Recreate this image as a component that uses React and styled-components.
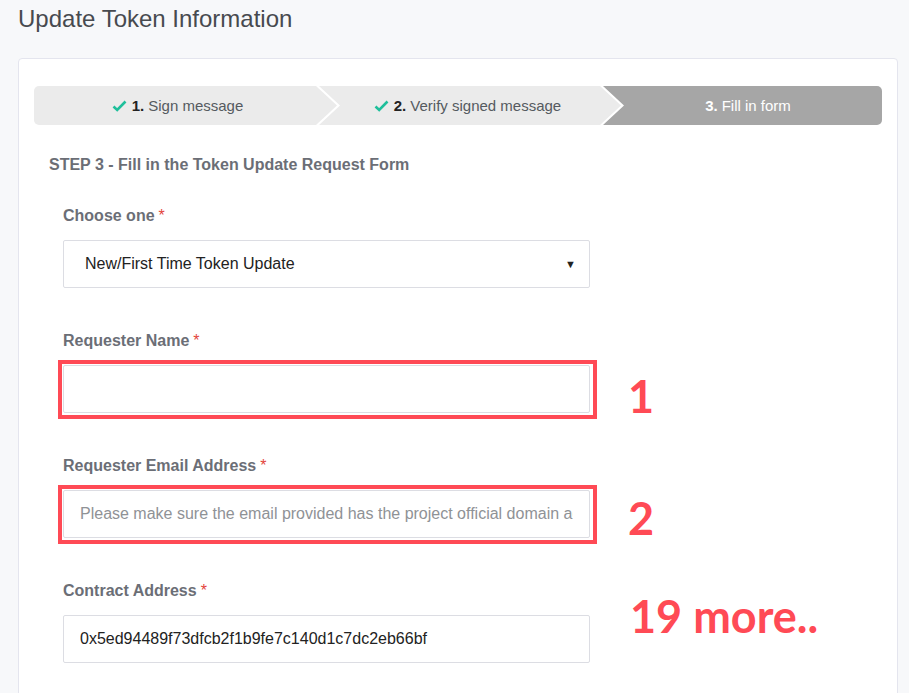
import React from "react";
import styled, { createGlobalStyle } from "styled-components";

const Global = createGlobalStyle`
  html, body { margin: 0; padding: 0; background: #f7f8fa; }
  body { font-family: "Liberation Sans", Arial, sans-serif; overflow: hidden; }
  * { box-sizing: border-box; }
`;

const Page = styled.div`
  padding: 5px 12px 0 18px;
  height: 693px;
  overflow: hidden;
`;

const Title = styled.h1`
  margin: 0 0 25px 0;
  font-size: 24px;
  line-height: 28px;
  font-weight: 400;
  color: #474a4f;
`;

const Card = styled.div`
  width: 880px;
  background: #fff;
  border: 1px solid #e4e5ee;
  border-radius: 4px;
  padding: 27px 15px 40px 15px;
  min-height: 700px;
`;

const StepBar = styled.div`
  display: flex;
  height: 39px;
  border-radius: 5px;
  overflow: hidden;
`;

const Step = styled.div`
  flex: ${(p) => (p.$last ? "1 1 auto" : `0 0 ${p.$w}px`)};
  margin-left: ${(p) => (p.$first ? "0" : "-18px")};
  background: ${(p) => (p.$active ? "#a6a6a6" : "#ebebeb")};
  color: ${(p) => (p.$active ? "#ffffff" : "#555a60")};
  display: flex;
  align-items: center;
  justify-content: center;
  font-size: 15px;
  padding-left: ${(p) => (p.$first ? "0" : "11px")};
  padding-right: ${(p) => (p.$last ? "0" : "16px")};
  clip-path: ${(p) => {
    const notch = p.$first ? "" : ", 21px 50%";
    if (p.$last) return `polygon(0 0, 100% 0, 100% 100%, 0 100%${notch})`;
    return `polygon(0 0, calc(100% - 21px) 0, 100% 50%, calc(100% - 21px) 100%, 0 100%${notch})`;
  }};
`;

const StepNum = styled.b`
  font-weight: 700;
  margin-right: 4px;
  color: ${(p) => (p.$active ? "#ffffff" : "#222")};
`;

const Check = styled.svg`
  width: 15px;
  height: 12px;
  margin-right: 5px;
  flex: none;
`;

const FormSection = styled.div`
  padding-left: 15px;
  padding-top: 31px;
`;

const Heading = styled.h2`
  margin: 0 0 32px 0;
  font-size: 16px;
  line-height: 18px;
  font-weight: 700;
  color: #6b6e76;
`;

const Fields = styled.div`
  padding-left: 14px;
  display: flex;
  flex-direction: column;
  gap: 43px;
`;

const Field = styled.div`
  position: relative;
  width: 527px;
`;

const Label = styled.label`
  display: block;
  font-size: 16px;
  line-height: 20px;
  font-weight: 700;
  color: #6b6e76;
  margin-bottom: 14px;
`;

const Req = styled.span`
  color: #e3443b;
  font-weight: 400;
  margin-left: 4px;
`;

const Control = styled.div`
  position: relative;
  height: 48px;
  border: 1px solid #dcdde3;
  border-radius: 2px;
  background: #fff;
  display: flex;
  align-items: center;
  padding: 0 16px 0 16px;
  font-size: 16px;
  color: #222;
  white-space: nowrap;

  ${(p) =>
    p.$marked &&
    `&::after {
      content: "";
      position: absolute;
      left: -6px;
      top: -6px;
      right: -8px;
      bottom: -7px;
      border: 4px solid #ff4a55;
    }`}
`;

const SelectControl = styled(Control)`
  padding-left: 21px;
  justify-content: space-between;
`;

const Clip = styled.span`
  display: block;
  overflow: hidden;
  flex: 1;
  color: ${(p) => (p.$placeholder ? "#8f9296" : "#222")};
`;

const Caret = styled.span`
  font-size: 11px;
  color: #222;
  margin-right: -3px;
`;

const Note = styled.div`
  position: absolute;
  left: ${(p) => p.$left}px;
  top: ${(p) => p.$top}px;
  font-family: Lato, "Open Sans", sans-serif;
  font-weight: 700;
  font-size: ${(p) => p.$size}px;
  line-height: 1;
  color: #ff4a55;
  white-space: nowrap;
`;

const CheckIcon = () => (
  <Check viewBox="0 0 15 12">
    <path d="M1.5 6.5 L5.2 10 L13.5 1.5" fill="none" stroke="#1fbf9b" strokeWidth="2.6" />
  </Check>
);

export default function App() {
  return (
    <>
      <Global />
      <Page>
        <Title>Update Token Information</Title>
        <Card>
          <StepBar>
            <Step $first $w={303}>
              <CheckIcon />
              <StepNum>1.</StepNum>Sign message
            </Step>
            <Step $w={302}>
              <CheckIcon />
              <StepNum>2.</StepNum>Verify signed message
            </Step>
            <Step $last $active>
              <StepNum $active>3.</StepNum>Fill in form
            </Step>
          </StepBar>
          <FormSection>
            <Heading>STEP 3 - Fill in the Token Update Request Form</Heading>
            <Fields>
              <Field>
                <Label>
                  Choose one<Req>*</Req>
                </Label>
                <SelectControl>
                  <Clip>New/First Time Token Update</Clip>
                  <Caret>▼</Caret>
                </SelectControl>
              </Field>
              <Field>
                <Label>
                  Requester Name<Req>*</Req>
                </Label>
                <Control $marked>
                  <Clip />
                </Control>
                <Note $left={565} $top={43} $size={45}>1</Note>
              </Field>
              <Field>
                <Label>
                  Requester Email Address<Req>*</Req>
                </Label>
                <Control $marked>
                  <Clip $placeholder>Please make sure the email provided has the project official domain address</Clip>
                </Control>
                <Note $left={565} $top={40} $size={45}>2</Note>
              </Field>
              <Field>
                <Label>
                  Contract Address<Req>*</Req>
                </Label>
                <Control>
                  <Clip>0x5ed94489f73dfcb2f1b9fe7c140d1c7dc2eb66bf</Clip>
                </Control>
                <Note $left={567} $top={13} $size={45}>19 more..</Note>
              </Field>
            </Fields>
          </FormSection>
        </Card>
      </Page>
    </>
  );
}
